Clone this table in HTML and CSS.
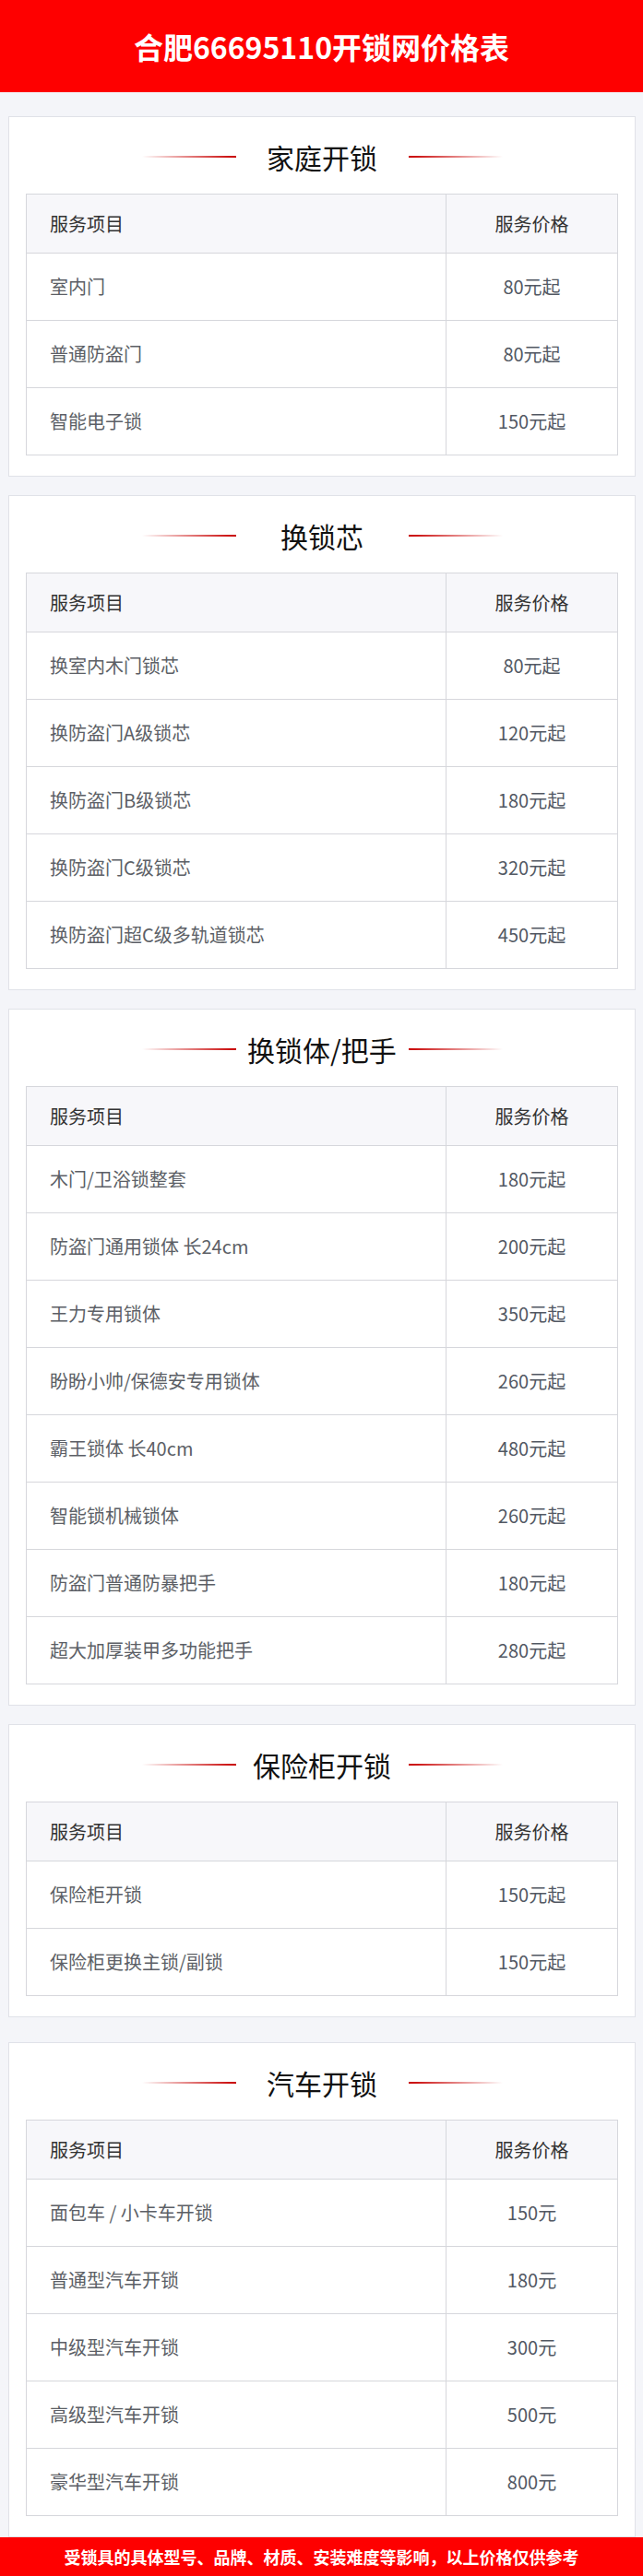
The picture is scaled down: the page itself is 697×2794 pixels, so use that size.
FILE: index.html
```html
<!DOCTYPE html>
<html lang="zh-CN">
<head>
<meta charset="utf-8">
<title>合肥66695110开锁网价格表</title>
<link rel="stylesheet" href="styles.css">
</head>
<body>
<header class="top">
  <h1 class="top-title">合肥66695110开锁网价格表</h1>
</header>

<main class="main">
  <section class="card">
    <div class="sec-title">
      <span class="line line-left"></span>
      <h2 class="sec-name">家庭开锁</h2>
      <span class="line line-right"></span>
    </div>
    <div class="table">
      <div class="row row-head"><div class="cell name">服务项目</div><div class="cell price">服务价格</div></div>
      <div class="row"><div class="cell name">室内门</div><div class="cell price">80元起</div></div>
      <div class="row"><div class="cell name">普通防盗门</div><div class="cell price">80元起</div></div>
      <div class="row"><div class="cell name">智能电子锁</div><div class="cell price">150元起</div></div>
    </div>
  </section>

  <section class="card">
    <div class="sec-title">
      <span class="line line-left"></span>
      <h2 class="sec-name">换锁芯</h2>
      <span class="line line-right"></span>
    </div>
    <div class="table">
      <div class="row row-head"><div class="cell name">服务项目</div><div class="cell price">服务价格</div></div>
      <div class="row"><div class="cell name">换室内木门锁芯</div><div class="cell price">80元起</div></div>
      <div class="row"><div class="cell name">换防盗门A级锁芯</div><div class="cell price">120元起</div></div>
      <div class="row"><div class="cell name">换防盗门B级锁芯</div><div class="cell price">180元起</div></div>
      <div class="row"><div class="cell name">换防盗门C级锁芯</div><div class="cell price">320元起</div></div>
      <div class="row"><div class="cell name">换防盗门超C级多轨道锁芯</div><div class="cell price">450元起</div></div>
    </div>
  </section>

  <section class="card">
    <div class="sec-title">
      <span class="line line-left"></span>
      <h2 class="sec-name">换锁体/把手</h2>
      <span class="line line-right"></span>
    </div>
    <div class="table">
      <div class="row row-head"><div class="cell name">服务项目</div><div class="cell price">服务价格</div></div>
      <div class="row"><div class="cell name">木门/卫浴锁整套</div><div class="cell price">180元起</div></div>
      <div class="row"><div class="cell name">防盗门通用锁体 长24cm</div><div class="cell price">200元起</div></div>
      <div class="row"><div class="cell name">王力专用锁体</div><div class="cell price">350元起</div></div>
      <div class="row"><div class="cell name">盼盼小帅/保德安专用锁体</div><div class="cell price">260元起</div></div>
      <div class="row"><div class="cell name">霸王锁体 长40cm</div><div class="cell price">480元起</div></div>
      <div class="row"><div class="cell name">智能锁机械锁体</div><div class="cell price">260元起</div></div>
      <div class="row"><div class="cell name">防盗门普通防暴把手</div><div class="cell price">180元起</div></div>
      <div class="row"><div class="cell name">超大加厚装甲多功能把手</div><div class="cell price">280元起</div></div>
    </div>
  </section>

  <section class="card">
    <div class="sec-title">
      <span class="line line-left"></span>
      <h2 class="sec-name">保险柜开锁</h2>
      <span class="line line-right"></span>
    </div>
    <div class="table">
      <div class="row row-head"><div class="cell name">服务项目</div><div class="cell price">服务价格</div></div>
      <div class="row"><div class="cell name">保险柜开锁</div><div class="cell price">150元起</div></div>
      <div class="row"><div class="cell name">保险柜更换主锁/副锁</div><div class="cell price">150元起</div></div>
    </div>
  </section>

  <section class="card card-car">
    <div class="sec-title">
      <span class="line line-left"></span>
      <h2 class="sec-name">汽车开锁</h2>
      <span class="line line-right"></span>
    </div>
    <div class="table">
      <div class="row row-head"><div class="cell name">服务项目</div><div class="cell price">服务价格</div></div>
      <div class="row"><div class="cell name">面包车 / 小卡车开锁</div><div class="cell price">150元</div></div>
      <div class="row"><div class="cell name">普通型汽车开锁</div><div class="cell price">180元</div></div>
      <div class="row"><div class="cell name">中级型汽车开锁</div><div class="cell price">300元</div></div>
      <div class="row"><div class="cell name">高级型汽车开锁</div><div class="cell price">500元</div></div>
      <div class="row"><div class="cell name">豪华型汽车开锁</div><div class="cell price">800元</div></div>
    </div>
  </section>
</main>

<footer class="bottom">受锁具的具体型号、品牌、材质、安装难度等影响，以上价格仅供参考</footer>
</body>
</html>
```

FILE: styles.css
```css
* {
  box-sizing: border-box;
}

html, body {
  margin: 0;
  padding: 0;
}

body {
  background: #f4f5f9;
  font-family: "Noto Sans CJK SC", "Noto Sans", "Liberation Sans", sans-serif;
  color: #333;
}

.top {
  height: 100px;
  background: #fe0000;
  display: flex;
  align-items: center;
  justify-content: center;
}

.top-title {
  margin: 0;
  color: #fff;
  font-size: 32px;
  font-weight: 700;
  line-height: 40px;
  letter-spacing: 0;
}

.main {
  display: flex;
  flex-direction: column;
  gap: 20px;
  padding: 26px 8px 42px 9px;
}

.card {
  width: 680px;
  background: #fff;
  border: 1px solid #e0e2e8;
  padding: 23px 18px 22px;
}

.card-car {
  margin-top: 7px;
}

.sec-title {
  height: 40px;
  margin-bottom: 20px;
  display: flex;
  align-items: center;
  justify-content: center;
}

.line {
  width: 102px;
  height: 2px;
  flex: none;
}

.line-left {
  background: linear-gradient(to right, rgba(214, 0, 0, 0), #c80000);
}

.line-right {
  background: linear-gradient(to right, #c80000, rgba(214, 0, 0, 0));
}

.sec-name {
  width: 187px;
  flex: none;
  margin: 0;
  text-align: center;
  white-space: nowrap;
  font-size: 30px;
  font-weight: 400;
  line-height: 40px;
  color: #111;
}

.table {
  border: 1px solid #d6d7dc;
  border-bottom: none;
}

.row {
  display: grid;
  grid-template-columns: 1fr 185px;
  height: 73px;
  border-bottom: 1px solid #d6d7dc;
}

.row-head {
  height: 64px;
  background: #f7f7fa;
}

.cell {
  display: flex;
  align-items: center;
  font-size: 20px;
  line-height: 28px;
  color: #5c5f66;
  white-space: nowrap;
}

.cell.name {
  padding-left: 25px;
  border-right: 1px solid #d6d7dc;
}

.cell.price {
  justify-content: center;
  color: #525863;
}

.row-head .cell {
  color: #333;
}

.bottom {
  position: fixed;
  left: 0;
  right: 0;
  bottom: 0;
  height: 42px;
  background: #fe0000;
  color: #fff;
  font-size: 18px;
  font-weight: 700;
  line-height: 42px;
  text-align: center;
  white-space: nowrap;
}
```
